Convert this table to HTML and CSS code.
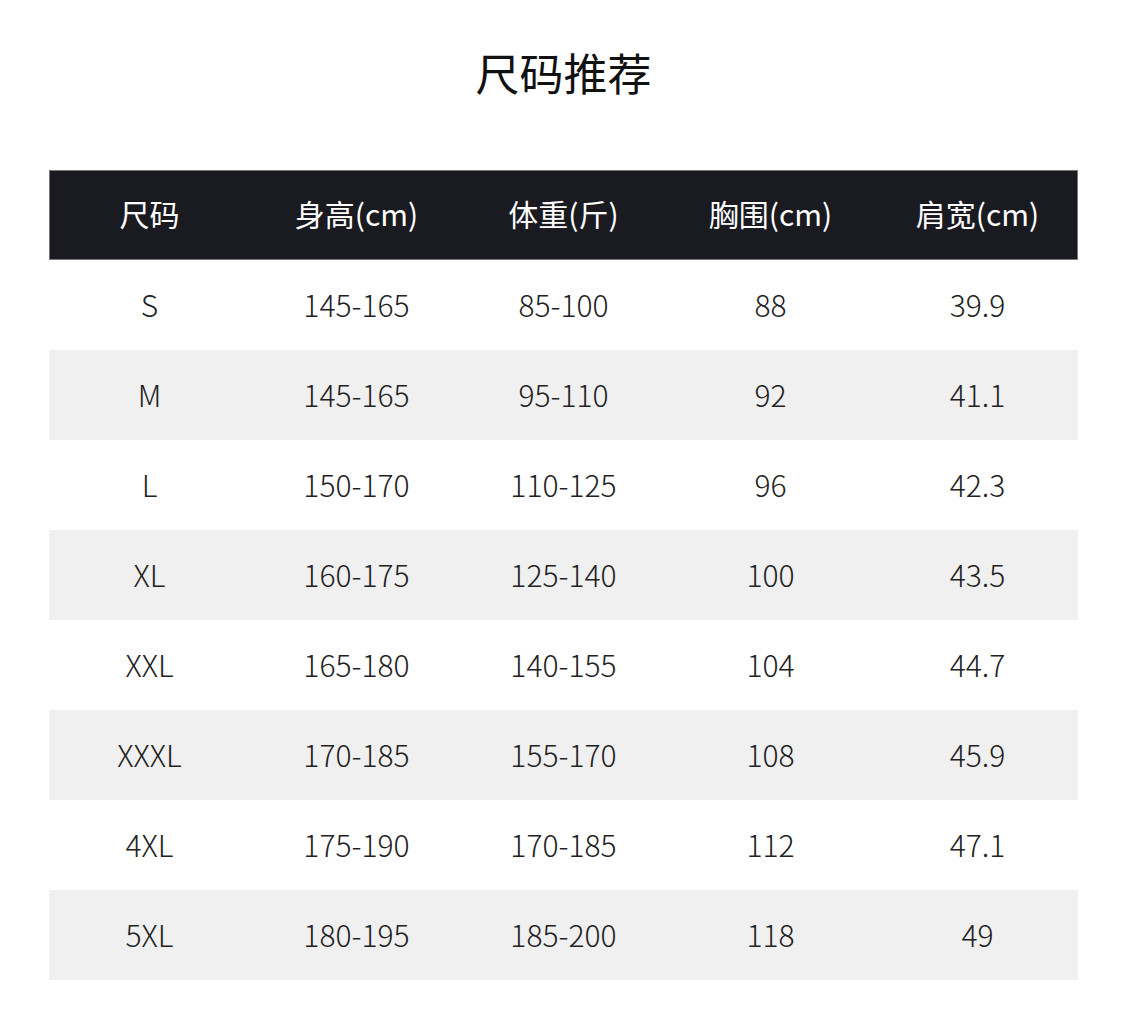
FILE: index.html
```html
<!DOCTYPE html>
<html lang="zh">
<head>
<meta charset="utf-8">
<link rel="stylesheet" href="styles.css">
</head>
<body>
<div class="page">
  <h1 class="title">尺码推荐</h1>
  <div class="table">
    <div class="row head"><div>尺码</div><div>身高(cm)</div><div>体重(斤)</div><div>胸围(cm)</div><div>肩宽(cm)</div></div>
    <div class="row"><div>S</div><div>145-165</div><div>85-100</div><div>88</div><div>39.9</div></div>
    <div class="row alt"><div>M</div><div>145-165</div><div>95-110</div><div>92</div><div>41.1</div></div>
    <div class="row"><div>L</div><div>150-170</div><div>110-125</div><div>96</div><div>42.3</div></div>
    <div class="row alt"><div>XL</div><div>160-175</div><div>125-140</div><div>100</div><div>43.5</div></div>
    <div class="row"><div>XXL</div><div>165-180</div><div>140-155</div><div>104</div><div>44.7</div></div>
    <div class="row alt"><div>XXXL</div><div>170-185</div><div>155-170</div><div>108</div><div>45.9</div></div>
    <div class="row"><div>4XL</div><div>175-190</div><div>170-185</div><div>112</div><div>47.1</div></div>
    <div class="row alt"><div>5XL</div><div>180-195</div><div>185-200</div><div>118</div><div>49</div></div>
  </div>
</div>
</body>
</html>
```
FILE: styles.css
```css
html, body {
  margin: 0;
  padding: 0;
  background: #fff;
}
.page {
  width: 1125px;
  height: 1027px;
  padding: 0 47px 0 49px;
  box-sizing: border-box;
  font-family: "Noto Sans CJK SC", "Noto Sans", sans-serif;
  color: #222;
}
.title {
  margin: 0;
  padding-top: 44px;
  height: 170px;
  box-sizing: border-box;
  text-align: center;
  font-size: 44px;
  font-weight: 400;
  line-height: 56px;
  color: #111;
}
.table {
  display: flex;
  flex-direction: column;
}
.row {
  display: grid;
  grid-template-columns: repeat(5, 207px);
  justify-content: center;
  height: 90px;
  box-sizing: border-box;
  padding-bottom: 3px;
  align-items: center;
  text-align: center;
  font-size: 30px;
  font-weight: 300;
  line-height: 40px;
}
.row.head {
  background: #1a1a21;
  color: #fff;
  font-weight: 400;
  padding-bottom: 4px;
  box-shadow: inset 0 0 0 1px #77777c;
}
.row.alt {
  background: #f0f0f0;
}
```
